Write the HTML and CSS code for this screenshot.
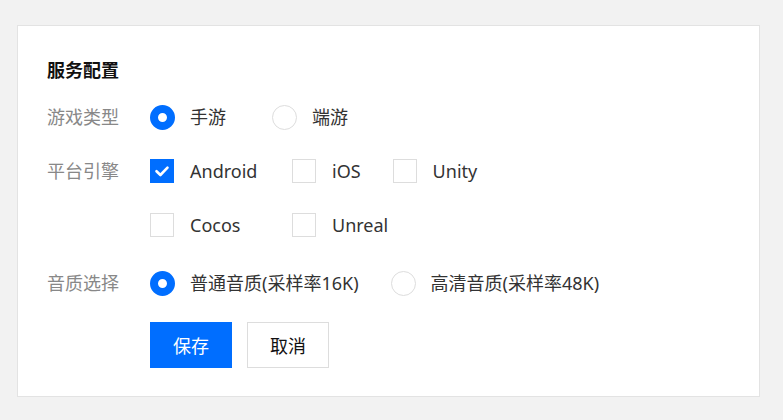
FILE: index.html
```html
<!DOCTYPE html>
<html lang="zh-CN">
<head>
    <meta charset="UTF-8">
    <meta name="viewport" content="width=device-width, initial-scale=1.0">
    <title>服务配置</title>
    <link rel="stylesheet" href="styles.css">
</head>
<body>
    <section class="config-card">
        <h2 class="card-title">服务配置</h2>

        <div class="form-row">
            <div class="form-label">游戏类型</div>
            <div class="form-controls">
                <label class="option option-short">
                    <span class="radio checked"></span>
                    <span class="option-text">手游</span>
                </label>
                <label class="option">
                    <span class="radio"></span>
                    <span class="option-text">端游</span>
                </label>
            </div>
        </div>

        <div class="form-row">
            <div class="form-label">平台引擎</div>
            <div class="form-controls check-group">
                <div class="check-line">
                    <label class="option option-wide">
                        <span class="checkbox checked">
                            <svg viewBox="0 0 24 24" width="24" height="24"><path d="M6.5 12.2 L10.4 16 L17.5 8.6" fill="none" stroke="#fff" stroke-width="2.6" stroke-linecap="round" stroke-linejoin="round"/></svg>
                        </span>
                        <span class="option-text">Android</span>
                    </label>
                    <label class="option">
                        <span class="checkbox"></span>
                        <span class="option-text">iOS</span>
                    </label>
                    <label class="option">
                        <span class="checkbox"></span>
                        <span class="option-text">Unity</span>
                    </label>
                </div>
                <div class="check-line">
                    <label class="option option-wide">
                        <span class="checkbox"></span>
                        <span class="option-text">Cocos</span>
                    </label>
                    <label class="option">
                        <span class="checkbox"></span>
                        <span class="option-text">Unreal</span>
                    </label>
                </div>
            </div>
        </div>

        <div class="form-row row-quality">
            <div class="form-label">音质选择</div>
            <div class="form-controls">
                <label class="option">
                    <span class="radio checked"></span>
                    <span class="option-text">普通音质(采样率16K)</span>
                </label>
                <label class="option">
                    <span class="radio"></span>
                    <span class="option-text">高清音质(采样率48K)</span>
                </label>
            </div>
        </div>

        <div class="form-actions">
            <button class="btn btn-primary">保存</button>
            <button class="btn">取消</button>
        </div>
    </section>
</body>
</html>
```

FILE: styles.css
```css
/* General Reset */
* { margin: 0; padding: 0; box-sizing: border-box; }
body { font-family: "Noto Sans", "Noto Sans CJK SC", sans-serif; font-size: 18px; color: #333; background-color: #f2f2f2; padding: 25px 23px 23px 17px; }
.config-card { background-color: #fff; border: 1px solid #e3e3e3; height: 372px; padding: 31px 29px; }
.card-title { font-size: 18px; font-weight: bold; color: #111; line-height: 26px; margin-bottom: 7px; }
.form-row { display: flex; align-items: flex-start; }
.form-label { width: 103px; height: 54px; line-height: 54px; color: #888; }
.form-controls { display: flex; align-items: center; height: 54px; }
.check-group { flex-direction: column; align-items: flex-start; height: auto; }
.check-line { display: flex; align-items: center; height: 54px; }
.row-quality { margin-top: 4px; }
.option { display: flex; align-items: center; margin-right: 32px; cursor: pointer; color: #333; }
.option-short { min-width: 90px; }
.option-wide { min-width: 110px; }
.option-text { line-height: 26px; }
.radio { width: 25px; height: 25px; border-radius: 50%; border: 1px solid #ddd; margin-right: 15px; flex-shrink: 0; }
.radio.checked { border: 8px solid #006eff; }
.checkbox { width: 24px; height: 24px; border: 1px solid #ddd; margin-right: 16px; flex-shrink: 0; display: flex; }
.checkbox.checked { background-color: #006eff; border-color: #006eff; }
.checkbox svg { display: block; margin: -1px; }
.form-actions { display: flex; gap: 15px; margin-top: 12px; padding-left: 103px; }
.btn { width: 82px; height: 46px; font-family: inherit; font-size: 18px; background-color: #fff; color: #111; border: 1px solid #ddd; cursor: pointer; }
.btn-primary { background-color: #006eff; border-color: #006eff; color: #fff; }
```
